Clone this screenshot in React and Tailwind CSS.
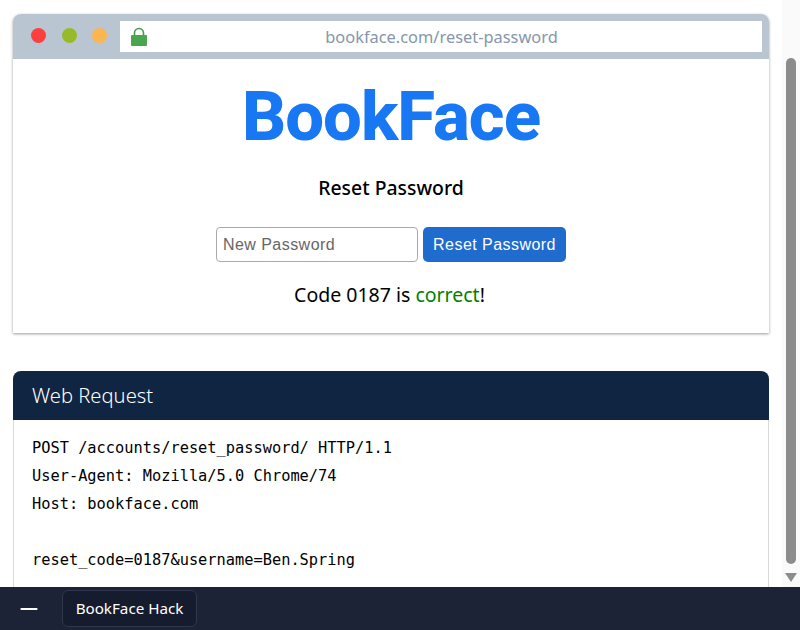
import { Minus } from "lucide-react";

const requestLines = [
  "POST /accounts/reset_password/ HTTP/1.1",
  "User-Agent: Mozilla/5.0 Chrome/74",
  "Host: bookface.com",
  "",
  "reset_code=0187&username=Ben.Spring",
];

function Lock() {
  return (
    <svg width="18" height="20" viewBox="0 0 18 20">
      <path d="M4.5 8V6a4.5 4.5 0 0 1 9 0v2" fill="none" stroke="#3f9c46" strokeWidth="1.6" />
      <rect x="1" y="8" width="16" height="11" rx="1" fill="#4aa54f" />
    </svg>
  );
}

function Scrollbar() {
  return (
    <div className="w-[18px] shrink-0 flex flex-col items-center pt-[58px] pb-[5px] bg-[#fafafa]">
      <div className="w-[10px] flex-1 rounded-full bg-[#8c8c8c]" />
      <svg className="mt-[9px]" width="12" height="9" viewBox="0 0 12 9">
        <path d="M0 0H12L6 9Z" fill="#8c8c8c" />
      </svg>
    </div>
  );
}

export default function App() {
  return (
    <div className="w-[800px] h-[630px] flex flex-col overflow-hidden bg-white font-['Noto_Sans',sans-serif]">
      <div className="flex-1 min-h-0 flex">
        <div className="flex-1 min-w-0 overflow-hidden pt-[14px] pl-[13px] pr-[13px]">

          {/* browser mockup */}
          <div className="h-[319px] rounded-t-[8px] bg-white shadow-[0_1px_3px_rgba(0,0,0,0.4)]">
            <div className="h-[45px] rounded-t-[8px] bg-[#b9c6d2] flex items-start pt-[7px] pr-[7px]">
              <div className="w-[107px] shrink-0 flex items-center gap-[15.5px] pl-[18px] h-[31px] pb-[3px]">
                <span className="w-[15px] h-[15px] rounded-full bg-[#fc3f3f]" />
                <span className="w-[15px] h-[15px] rounded-full bg-[#97ba2a]" />
                <span className="w-[15px] h-[15px] rounded-full bg-[#fdb54e]" />
              </div>
              <div className="flex-1 h-[31px] bg-white flex items-center pl-[10px]">
                <Lock />
                <div className="flex-1 text-center text-[16.4px] text-[#8597ab] pr-[27px] pt-[2px]">bookface.com/reset-password</div>
              </div>
            </div>

            <div className="flex flex-col items-center">
              <h1 className="mt-[14px] h-[88px] font-['Roboto',sans-serif] text-[69px] leading-[88px] font-extrabold text-[#1877f2] tracking-[-1px]">BookFace</h1>
              <h2 className="mt-[13px] h-[28px] text-[19.4px] leading-[28px] font-medium text-black">Reset Password</h2>
              <div className="mt-[25px] flex gap-[5px] font-['Liberation_Sans',sans-serif]">
                <input
                  placeholder="New Password"
                  className="w-[202px] h-[35px] px-[6px] rounded-[4px] border border-[#aaaaaa] text-[16px] tracking-[0.45px] placeholder:text-[#666666] outline-none"
                />
                <button className="w-[143px] h-[35px] rounded-[5px] bg-[#1f6bce] text-white text-[16px] tracking-[0.45px]">Reset Password</button>
              </div>
              <p className="mt-[19px] text-[19.5px] leading-[28px] text-black pr-[3px]">
                Code 0187 is <span className="text-[#008000]">correct</span>!
              </p>
            </div>
          </div>

          {/* web request */}
          <div className="mt-[38px] border-x border-[#d9d9d9] rounded-t-[8px]">
            <div className="-mx-px h-[49px] rounded-t-[8px] bg-[#102542] px-[19px] flex items-center text-[20.2px] text-white font-light">
              Web Request
            </div>
            <div className="px-[18px] pt-[14px] h-[200px] font-['DejaVu_Sans_Mono',monospace] text-[15.33px] leading-[28px] text-black">
              {requestLines.map((line, i) => (
                <div key={i} className="h-[28px] whitespace-pre">{line}</div>
              ))}
            </div>
          </div>
        </div>
        <Scrollbar />
      </div>

      {/* bottom bar */}
      <div className="h-[43px] shrink-0 bg-[#1c2337] flex items-center">
        <div className="w-[62px] flex justify-center pr-[4px]">
          <Minus size={26} strokeWidth={1.9} className="text-white" />
        </div>
        <div className="h-[37px] w-[135px] rounded-[6px] border border-[#2e374c] bg-[#151c2e] flex items-center justify-center text-[15.2px] text-white">
          BookFace Hack
        </div>
      </div>
    </div>
  );
}
